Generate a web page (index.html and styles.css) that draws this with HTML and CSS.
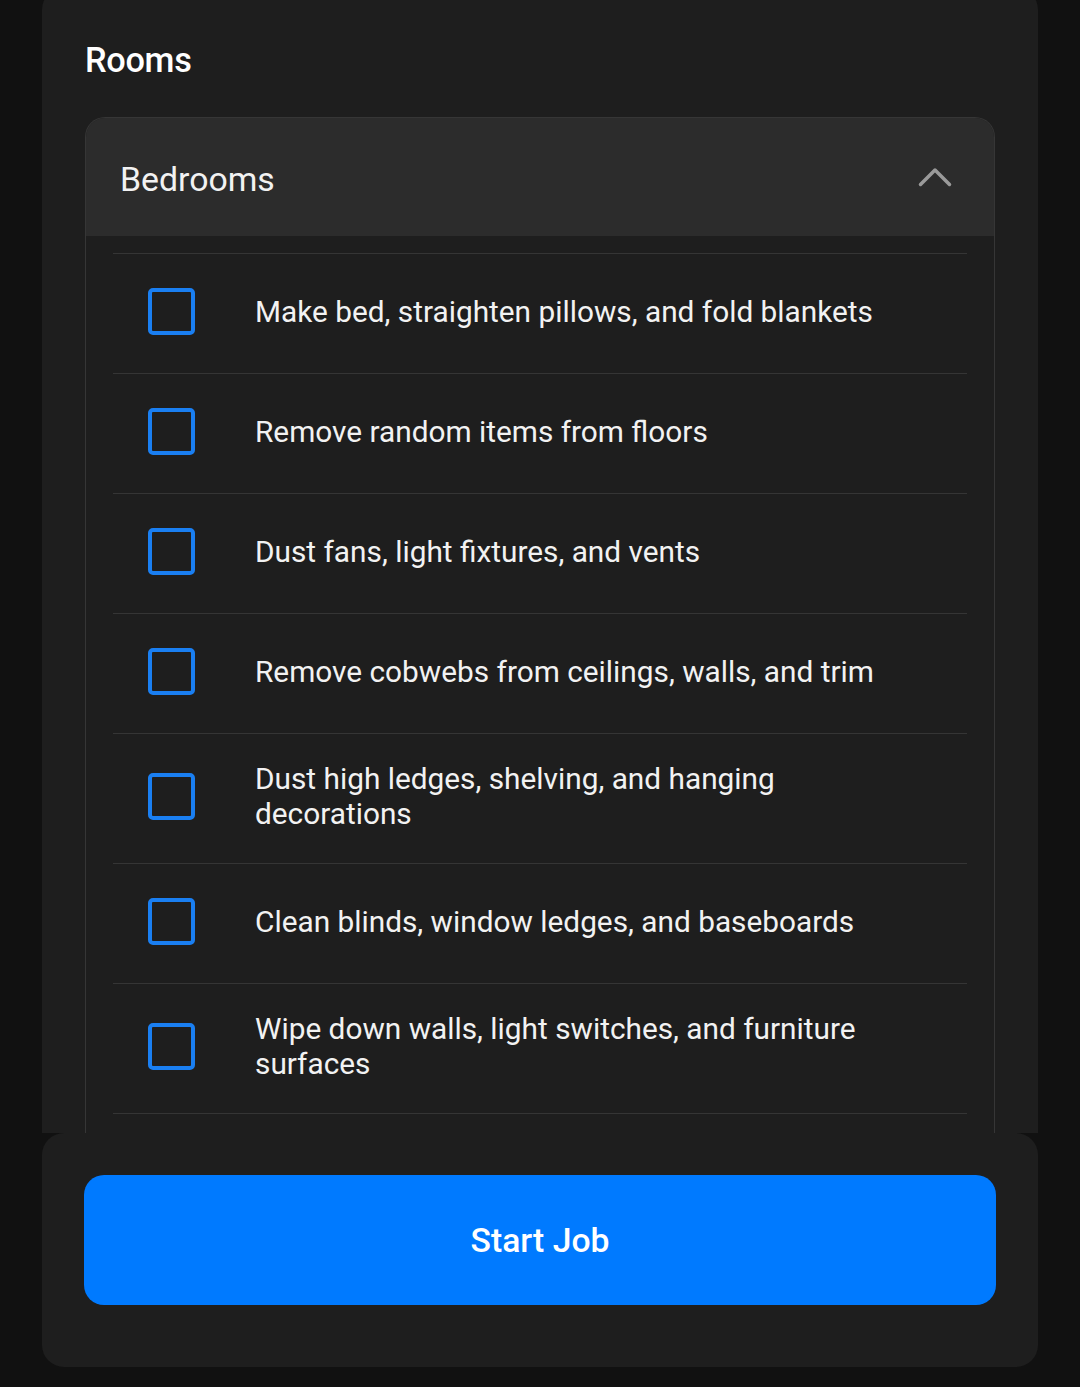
FILE: index.html
```html
<!DOCTYPE html>
<html lang="en">
<head>
<meta charset="UTF-8">
<meta name="viewport" content="width=device-width, initial-scale=1.0">
<title>Rooms</title>
<link rel="stylesheet" href="styles.css">
</head>
<body>

<div class="scroll">
    <div class="card">
        <h2 class="title">Rooms</h2>

        <div class="accordion">
            <div class="accordion-head">
                <span class="accordion-label">Bedrooms</span>
                <svg class="chevron" width="34" height="20" viewBox="0 0 34 20">
                    <path d="M2.5 17.5 L17 3 L31.5 17.5" fill="none" stroke="#9a9a9a" stroke-width="3.5" stroke-linecap="round" stroke-linejoin="round"/>
                </svg>
            </div>

            <div class="accordion-body">
                <div class="task">
                    <span class="box"></span>
                    <span class="task-text">Make bed, straighten pillows, and fold blankets</span>
                </div>
                <div class="task">
                    <span class="box"></span>
                    <span class="task-text">Remove random items from floors</span>
                </div>
                <div class="task">
                    <span class="box"></span>
                    <span class="task-text">Dust fans, light fixtures, and vents</span>
                </div>
                <div class="task">
                    <span class="box"></span>
                    <span class="task-text">Remove cobwebs from ceilings, walls, and trim</span>
                </div>
                <div class="task">
                    <span class="box"></span>
                    <span class="task-text">Dust high ledges, shelving, and hanging decorations</span>
                </div>
                <div class="task">
                    <span class="box"></span>
                    <span class="task-text">Clean blinds, window ledges, and baseboards</span>
                </div>
                <div class="task">
                    <span class="box"></span>
                    <span class="task-text">Wipe down walls, light switches, and furniture surfaces</span>
                </div>
                <div class="task">
                    <span class="box"></span>
                    <span class="task-text">Vacuum carpets and rugs</span>
                </div>
            </div>
        </div>
    </div>
</div>

<div class="footer">
    <button class="start-button">Start Job</button>
</div>

</body>
</html>
```

FILE: styles.css
```css
body {
    font-family: Roboto, "Noto Sans", Arial, sans-serif;
    background-color: #111111;
    color: #ffffff;
    margin: 0;
    padding: 0 42px;
    height: 1387px;
    overflow: hidden;
}

.scroll {
    height: 1133px;
    overflow: hidden;
}

.card {
    margin-top: -14px;
    background-color: #1e1e1e;
    border-radius: 24px 24px 0 0;
    padding: 52px 43px 40px 43px;
}

.title {
    margin: 0 0 35px 0;
    font-size: 34.3px;
    font-weight: 500;
    line-height: 44px;
    letter-spacing: -0.3px;
}

.accordion {
    border: 1px solid #363636;
    border-bottom: none;
    border-radius: 20px 20px 0 0;
    overflow: hidden;
}

.accordion-head {
    background-color: #2c2c2c;
    height: 118px;
    display: flex;
    align-items: center;
    justify-content: space-between;
    padding: 0 42px 0 34px;
}

.accordion-label {
    font-size: 33.8px;
    color: #f2f2f2;
    padding-top: 5px;
}

.accordion-body {
    padding: 17px 27px 0 27px;
}

.task {
    border-top: 1.5px solid #353535;
    min-height: 120px;
    padding: 27px 0 32px 0;
    box-sizing: border-box;
    display: flex;
    align-items: center;
}

.box {
    flex: none;
    width: 39px;
    height: 39px;
    border: 4.5px solid #1a7ff2;
    border-radius: 5px;
    margin-left: 35px;
    margin-right: 60px;
}

.task-text {
    font-size: 29.8px;
    line-height: 35px;
    color: #f2f2f2;
    max-width: 650px;
}

.footer {
    background-color: #1e1e1e;
    border-radius: 22px;
    height: 234px;
    box-sizing: border-box;
    padding: 42px 42px 0 42px;
}

.start-button {
    display: block;
    width: 100%;
    height: 130px;
    background-color: #007aff;
    border: none;
    border-radius: 20px;
    color: #ffffff;
    font-family: Roboto, "Noto Sans", Arial, sans-serif;
    font-size: 33.7px;
    font-weight: 500;
}
```
